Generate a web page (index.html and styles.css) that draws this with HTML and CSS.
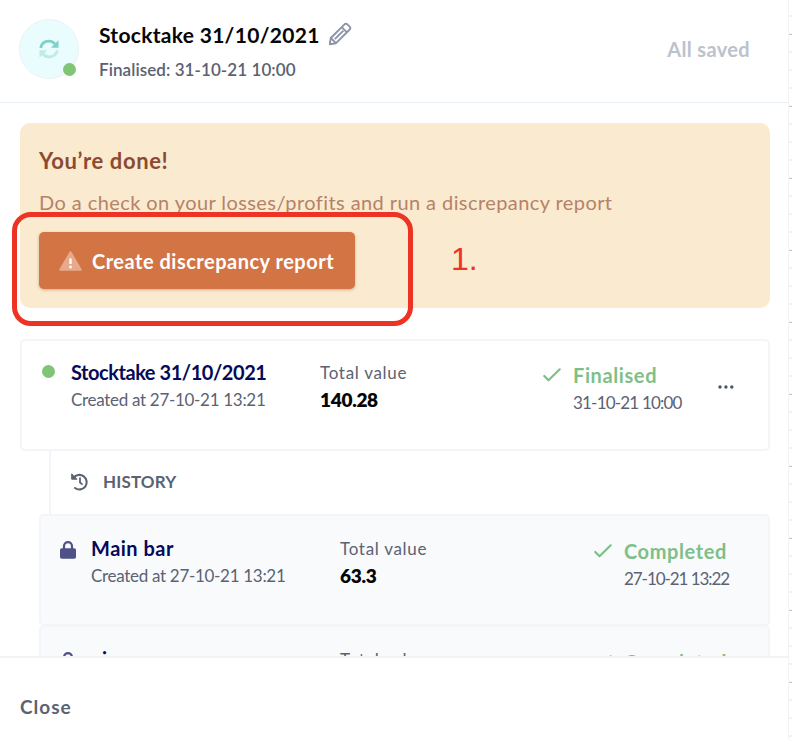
FILE: index.html
```html
<!DOCTYPE html>
<html lang="en">
<head>
    <meta charset="UTF-8">
    <meta name="viewport" content="width=device-width, initial-scale=1.0">
    <title>Stocktake 31/10/2021</title>
    <link rel="stylesheet" href="styles.css">
</head>
<body>
<div class="page">
    <div class="panel">
        <header class="header">
            <div class="avatar">
                <svg width="20" height="20" viewBox="0 0 20 20" fill="none" stroke-width="2.8">
                    <g stroke="#7fd0c6"><path d="M1.700 9A8.200 8.200 0 0 1 16 5"/><path d="M19.500 1.200v7.600h-7.600z" fill="#7fd0c6" stroke="none"/></g>
                    <g stroke="#bfeae5"><path d="M18.300 11.500A8.200 8.200 0 0 1 4 15"/><path d="M.5 18.800v-7.600h7.600z" fill="#bfeae5" stroke="none"/></g>
                </svg>
                <span class="dot avatar-dot"></span>
            </div>
            <div class="heading">
                <div class="title-row">
                    <h1>Stocktake 31/10/2021</h1>
                    <svg width="24" height="24" viewBox="0 0 24 24" fill="none" stroke="#8b94a7" stroke-width="1.900" stroke-linejoin="round">
                        <path d="M1.800 22.200l1-6.200L16.500 2.300q1.400-1.200 2.800 0l2.400 2.400q1.200 1.400 0 2.800L8 21.200z"/>
                        <path d="M13.700 5.100l5.200 5.200M2.800 16l5.200 5.200M6.800 17.200l8.600-8.600"/>
                    </svg>
                </div>
                <p class="finalised">Finalised: 31-10-21 10:00</p>
            </div>
            <span class="saved">All saved</span>
        </header>

        <main class="content">
            <section class="notice">
                <h2>You’re done!</h2>
                <p>Do a check on your losses/profits and run a discrepancy report</p>
                <button class="report">
                    <svg width="23" height="20" viewBox="0 0 23 20">
                        <path d="M11.500 1.200L21.800 18.800H1.200z" fill="#e6aa8b" stroke="#e6aa8b" stroke-width="2" stroke-linejoin="round"/>
                        <path d="M11.500 7.500v5.500M11.500 14.800v2.400" stroke="#fff" stroke-width="2.400"/>
                    </svg>
                    <span>Create discrepancy report</span>
                </button>
                <div class="highlight"></div>
                <span class="step">1.</span>
            </section>

            <section class="card">
                <div class="mark"><span class="dot"></span></div>
                <div class="info">
                    <h3 class="t-main">Stocktake 31/10/2021</h3>
                    <p class="created">Created at 27-10-21 13:21</p>
                </div>
                <div class="value">
                    <p class="label">Total value</p>
                    <p class="amount">140.28</p>
                </div>
                <svg class="check" width="18" height="14" viewBox="0 0 18 14" fill="none" stroke="#7fbf88" stroke-width="2.200" stroke-linecap="round" stroke-linejoin="round"><path d="M1.300 8l4.200 4.300L16.700 1.300"/></svg>
                <div class="status">
                    <p class="state">Finalised</p>
                    <p class="date">31-10-21 10:00</p>
                </div>
                <svg class="more" width="16" height="4" viewBox="0 0 16 4" fill="#4d5368"><circle cx="2" cy="2" r="1.700"/><circle cx="7.900" cy="2" r="1.700"/><circle cx="13.800" cy="2" r="1.700"/></svg>
            </section>

            <div class="history">
                <svg width="18" height="18" viewBox="0 0 18 18" fill="none" stroke="#5b6272" stroke-width="2.100" stroke-linecap="round" stroke-linejoin="round">
                    <path d="M2.500 4.800A7.300 7.300 0 1 1 4 15"/>
                    <path d="M.7 1.200v5h5z" fill="#5b6272" stroke-width="1"/>
                    <path d="M9 5.200v4.300l2 1.600" stroke-width="1.800"/>
                </svg>
                <span>HISTORY</span>
            </div>

            <section class="card sub">
                <div class="mark">
                    <svg width="16" height="18" viewBox="0 0 16 18"><rect y="7.300" width="16" height="10.500" rx="1.800" fill="#4e5087"/><path d="M4 8V5.200a4 4 0 0 1 8 0V8" fill="none" stroke="#4e5087" stroke-width="2.200"/></svg>
                </div>
                <div class="info">
                    <h3 class="t-bar">Main bar</h3>
                    <p class="created">Created at 27-10-21 13:21</p>
                </div>
                <div class="value">
                    <p class="label">Total value</p>
                    <p class="amount">63.3</p>
                </div>
                <svg class="check" width="18" height="14" viewBox="0 0 18 14" fill="none" stroke="#7fbf88" stroke-width="2.200" stroke-linecap="round" stroke-linejoin="round"><path d="M1.300 8l4.200 4.300L16.700 1.300"/></svg>
                <div class="status">
                    <p class="state">Completed</p>
                    <p class="date">27-10-21 13:22</p>
                </div>
            </section>

            <section class="card sub">
                <div class="mark">
                    <svg width="16" height="18" viewBox="0 0 16 18"><rect y="7.300" width="16" height="10.500" rx="1.800" fill="#4e5087"/><path d="M4 8V5.200a4 4 0 0 1 8 0V8" fill="none" stroke="#4e5087" stroke-width="2.200"/></svg>
                </div>
                <div class="info">
                    <h3 class="t-bar">gin</h3>
                </div>
                <div class="value">
                    <p class="label">Total value</p>
                </div>
                <svg class="check" width="18" height="14" viewBox="0 0 18 14" fill="none" stroke="#7fbf88" stroke-width="2.200" stroke-linecap="round" stroke-linejoin="round"><path d="M1.300 8l4.200 4.300L16.700 1.300"/></svg>
                <div class="status">
                    <p class="state">Completed</p>
                </div>
            </section>
        </main>

        <footer class="footer">
            <span>Close</span>
        </footer>
    </div>
    <div class="ruler"></div>
</div>
</body>
</html>
```
FILE: styles.css
```css
*{
    box-sizing: border-box;
    margin: 0;
    padding: 0;
}
body{
    font-family: Lato, "Liberation Sans", sans-serif;
    font-size: 17px;
    line-height: 22px;
    color: #5b6272;
    background: #fff;
    white-space: nowrap;
}
svg{
    display: block;
    flex-shrink: 0;
}
.page{
    display: flex;
    width: 792px;
    height: 740px;
    overflow: hidden;
}
.panel{
    display: flex;
    flex-direction: column;
    width: 788px;
}
/* ticks of the sheet behind the panel */
.ruler{
    width: 4px;
    border-left: 1px solid #f3f3f5;
    background:
        repeating-linear-gradient(#c9c9c9 0 1px, transparent 1px 72px) 0 34px / 4px 720px no-repeat,
        repeating-linear-gradient(transparent 0 15px, #f1f1f1 15px 17px, transparent 17px 18px);
}

/* header */
.header{
    display: flex;
    height: 103px;
    padding: 19px 38px 0 19px;
    border-bottom: 1px solid #e9f0f5;
}
.avatar{
    position: relative;
    display: flex;
    align-items: center;
    justify-content: center;
    width: 60px;
    height: 60px;
    border: 1px solid #f0eff5;
    border-radius: 50%;
    background: #e9fdff;
}
.dot{
    display: block;
    width: 13px;
    height: 13px;
    border-radius: 50%;
    background: #80c576;
}
.avatar-dot{
    position: absolute;
    right: 2px;
    bottom: 2px;
}
.heading{
    margin: 3px 0 0 20px;
}
.title-row{
    display: flex;
    gap: 8px;
    height: 37px;
}
h1{
    font-size: 21px;
    line-height: 26px;
    letter-spacing: 0.3px;
    color: #060606;
}
.finalised{
    font-weight: 600;
    letter-spacing: 0.08px;
}
.saved{
    margin: 19px 0 0 auto;
    font-size: 20px;
    font-weight: 700;
    letter-spacing: 0.35px;
    color: #bcc2cd;
}

/* content */
.content{
    height: 553px;
    padding: 20px 18px 0 20px;
    overflow: hidden;
}
.notice{
    position: relative;
    height: 185px;
    padding: 24px 19px;
    border-radius: 10px;
    background: #faeacf;
}
h2{
    font-size: 22px;
    line-height: 28px;
    letter-spacing: 0.6px;
    color: #8a4b32;
}
.notice p{
    margin-top: 13px;
    font-size: 20px;
    line-height: 28px;
    letter-spacing: 0.42px;
    color: #b58269;
}
.report{
    display: flex;
    align-items: center;
    gap: 10px;
    width: 316px;
    height: 57px;
    margin-top: 16px;
    padding: 0 20px;
    border: 0;
    border-radius: 5px;
    background: #d37444;
    box-shadow: 0 1px 3px rgba(120, 60, 20, 0.35);
    font: 700 20px Lato, sans-serif;
    letter-spacing: 0.5px;
    color: #fff;
}
.highlight{
    position: absolute;
    left: -8px;
    top: 89px;
    width: 401px;
    height: 114px;
    border: 5px solid #ed3323;
    border-radius: 19px;
}
.step{
    position: absolute;
    left: 431px;
    top: 118px;
    font: 32px/36px "Liberation Sans", sans-serif;
    color: #ed3323;
}
.card{
    display: grid;
    grid-template-columns: 29px 249px 223px 30px 145px 16px;
    height: 112px;
    margin-top: 31px;
    padding: 19px 0 0 20px;
    border: 2px solid #f4f5f9;
    border-radius: 5px;
}
.mark{
    padding-top: 5px;
}
h3{
    height: 29px;
    font-size: 20px;
    line-height: 26px;
    color: #050b58;
}
.t-main{
    line-height: 25px;
    letter-spacing: -0.45px;
}
.t-bar{
    letter-spacing: 0.5px;
}
.created{
    letter-spacing: -0.3px;
}
.value{
    padding-top: 2px;
}
.label{
    letter-spacing: 0.7px;
}
.amount{
    margin-top: 5px;
    font-size: 19px;
    font-weight: 800;
    letter-spacing: -0.3px;
    color: #060606;
}
.check{
    margin-top: 8px;
}
.state{
    height: 28px;
    margin-top: 4px;
    font-size: 20px;
    font-weight: 700;
    letter-spacing: 0.6px;
    color: #7fbf88;
}
.date{
    letter-spacing: -0.8px;
}
.more{
    margin-top: 25px;
}
.history{
    display: flex;
    align-items: center;
    gap: 14px;
    height: 63px;
    margin-left: 29px;
    padding: 0 0 2px 20px;
    border-left: 2px solid #f4f5f9;
    font-weight: 700;
    letter-spacing: 0.15px;
}
.sub{
    grid-template-columns: 30px 249px 254px 30px 130px;
    margin: 0 0 -1px 19px;
    padding-top: 20px;
    background: #f9fafc;
}
.sub .mark{
    margin-left: -1px;
}
.sub h3{
    line-height: 25px;
}
.sub .date{
    letter-spacing: -1.05px;
}

/* footer */
.footer{
    flex: 1;
    padding: 38px 0 0 20px;
    border-top: 2px solid #f1f3f6;
    font-size: 19px;
    font-weight: 700;
    letter-spacing: 1px;
}
```
